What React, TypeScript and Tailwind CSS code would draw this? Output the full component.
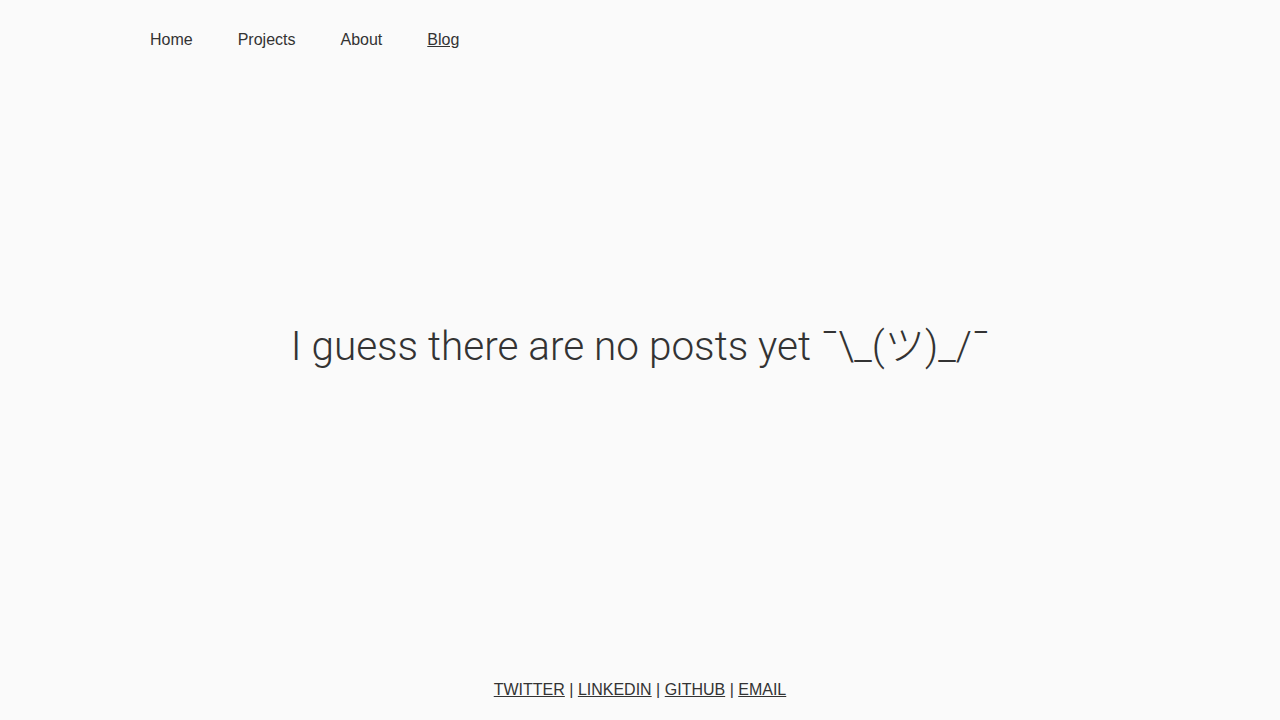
export default function App() {
  return (
    <div
      className="h-[720px] w-[1280px] bg-[#fafafa] text-[#333] flex flex-col"
      style={{ fontFamily: '"Liberation Sans", Arial, sans-serif' }}
    >
      <nav className="flex pl-[128px] pt-[30px] text-[16px] leading-[20px]">
        <a className="px-[22px]">Home</a>
        <a className="pl-[23px] pr-[22px]">Projects</a>
        <a className="pl-[23px] pr-[22px]">About</a>
        <a className="pl-[23px] pr-[22px] underline">Blog</a>
      </nav>
      <main className="flex-1 flex items-center justify-center pb-[37px]">
        <h1
          className="text-[40.5px] font-light text-[#333] leading-none"
          style={{ fontFamily: 'Roboto, "Noto Sans CJK JP", sans-serif' }}
        >
          I guess there are no posts yet ¯\_(ツ)_/¯
        </h1>
      </main>
      <footer className="text-center text-[16px] leading-[20px] pb-[20px]">
        <a className="underline">TWITTER</a> | <a className="underline">LINKEDIN</a> |{" "}
        <a className="underline">GITHUB</a> | <a className="underline">EMAIL</a>
      </footer>
    </div>
  );
}
